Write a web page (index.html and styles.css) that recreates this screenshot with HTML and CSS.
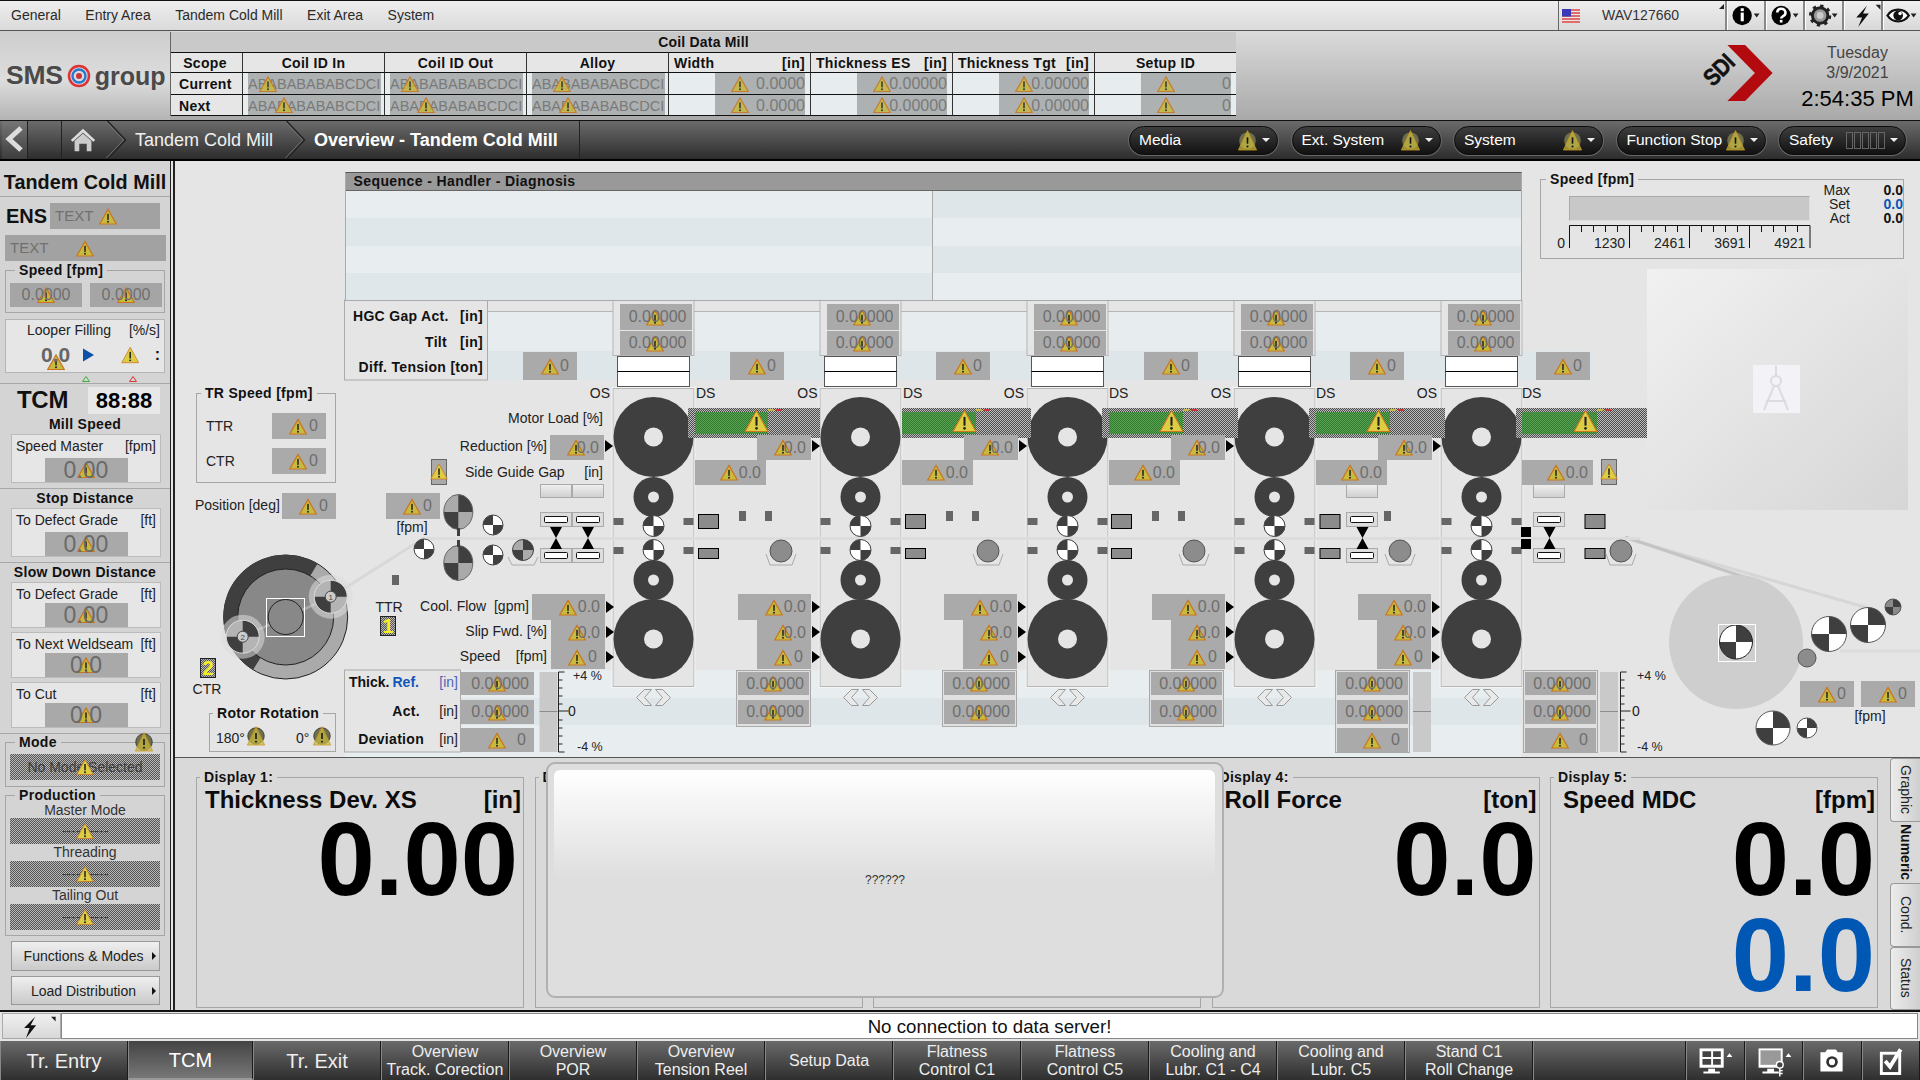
FILE: index.html
```html
<!DOCTYPE html>
<html lang="en">
<head>
<meta charset="utf-8">
<title>Overview - Tandem Cold Mill</title>
<link rel="stylesheet" href="styles.css">
</head>
<body>
<svg class="defs" aria-hidden="true">
  <symbol id="w" viewBox="0 0 24 22"><polygon points="12,1.5 23,21 1,21" fill="#c8ba3e" stroke="#c9761f" stroke-width="1.6"/><rect x="11" y="7.5" width="2" height="8" fill="#222"/><circle cx="12" cy="18" r="1.3" fill="#222"/></symbol>
  <symbol id="wb" viewBox="0 0 24 22"><polygon points="12,1 23,21 1,21" fill="#dccd45" stroke="#c9761f" stroke-width="1"/><rect x="11" y="7" width="2" height="8.5" fill="#222"/><circle cx="12" cy="18" r="1.3" fill="#222"/></symbol>
  <symbol id="wc" viewBox="0 0 24 26"><circle cx="12" cy="13" r="11" fill="#6f6f4c" stroke="#2a2a2a"/><polygon points="12,0.500 23.500,25 0.500,25" fill="#c8ba3e" fill-opacity=".72" stroke="#c9961f"/><rect x="11" y="9" width="2" height="8" fill="#111"/><circle cx="12" cy="20.500" r="1.300" fill="#111"/></symbol>
</svg>

<header class="menubar">
  <nav class="menu"><span>General</span><span>Entry Area</span><span>Tandem Cold Mill</span><span>Exit Area</span><span>System</span></nav>
  <div class="login">
    <svg class="flag" viewBox="0 0 18 14"><rect width="18" height="14" fill="#e8e8e8"/><path d="M0 1h18M0 4h18M0 7h18M0 10h18M0 13h18" stroke="#d44" stroke-width="1.4"/><rect width="9" height="7.5" fill="#3a3ab8"/></svg>
    <span>WAV127660</span><i class="corner"></i>
  </div>
  <div class="tile"><svg viewBox="0 0 39 30"><circle cx="15" cy="15" r="10" fill="#000"/><rect x="13.5" y="12" width="3.2" height="9" fill="#fff"/><rect x="13.5" y="7.5" width="3.2" height="3" fill="#fff"/><path d="M27 13h6l-3 4z" fill="#222"/></svg></div>
  <div class="tile"><svg viewBox="0 0 39 30"><circle cx="15" cy="15" r="10" fill="#000"/><path d="M11 12a4.2 4 0 1 1 6 3.6c-1.4.8-2 1.4-2 2.6" fill="none" stroke="#fff" stroke-width="2.6"/><rect x="13.6" y="19.5" width="2.8" height="2.8" fill="#fff"/><path d="M27 13h6l-3 4z" fill="#222"/></svg></div>
  <div class="tile"><svg viewBox="0 0 39 30"><circle cx="15" cy="15" r="8" fill="#999" stroke="#222" stroke-width="3"/><circle cx="15" cy="15" r="10" fill="none" stroke="#222" stroke-width="3" stroke-dasharray="3.4 4.4"/><circle cx="15" cy="15" r="3.5" fill="#ccc"/><path d="M27 13h6l-3 4z" fill="#222"/></svg></div>
  <div class="tile"><svg viewBox="0 0 39 30"><path d="M23 5L12 17h6l-4 10 11-14h-6z" fill="#111"/><path d="M32 4h5v5z" fill="#222"/></svg></div>
  <div class="tile"><svg viewBox="0 0 39 30"><path d="M4 15c5-8 17-8 22 0-5 8-17 8-22 0z" fill="#fff" stroke="#111" stroke-width="2.4"/><circle cx="15" cy="15" r="5" fill="#111"/><circle cx="17" cy="13" r="1.8" fill="#fff"/><path d="M28 13h6l-3 4z" fill="#222"/></svg></div>
</header>

<section class="head">
  <div class="logo"><span class="sms">SMS</span><svg class="ring" viewBox="0 0 24 24"><circle cx="12" cy="12" r="10" fill="#d9d9e4" stroke="#d33" stroke-width="2.5"/><circle cx="12" cy="12" r="6.5" fill="none" stroke="#2a78c8" stroke-width="2.4"/><circle cx="12" cy="12" r="3" fill="#c33"/></svg><span class="grp">group</span></div>
  <div class="coil">
    <div class="coil-t">Coil Data Mill</div>
    <div class="th">Scope</div><div class="th">Coil ID In</div><div class="th">Coil ID Out</div><div class="th">Alloy</div>
    <div class="th sp"><span>Width</span><span>[in]</span></div><div class="th sp"><span>Thickness ES</span><span>[in]</span></div><div class="th sp"><span>Thickness Tgt</span><span>[in]</span></div><div class="th">Setup ID</div>
    <div class="rh">Current</div>
    <div class="td"><b>ABABABABABCDCI</b><svg class="w c25"><use href="#w"/></svg></div>
    <div class="td"><b>ABABABABABCDCI</b><svg class="w c25"><use href="#w"/></svg></div>
    <div class="td"><b>ABABABABABCDCI</b><svg class="w c35"><use href="#w"/></svg></div>
    <div class="td num"><b>0.0000</b><svg class="w c71"><use href="#w"/></svg></div>
    <div class="td num"><b>0.00000</b><svg class="w c71"><use href="#w"/></svg></div>
    <div class="td num"><b>0.00000</b><svg class="w c71"><use href="#w"/></svg></div>
    <div class="td num"><b>0</b><svg class="w c71"><use href="#w"/></svg></div>
    <div class="rh">Next</div>
    <div class="td"><b>ABABABABABCDCI</b><svg class="w c41"><use href="#w"/></svg></div>
    <div class="td"><b>ABABABABABCDCI</b><svg class="w c41"><use href="#w"/></svg></div>
    <div class="td"><b>ABABABABABCDCI</b><svg class="w c41"><use href="#w"/></svg></div>
    <div class="td num"><b>0.0000</b><svg class="w c71"><use href="#w"/></svg></div>
    <div class="td num"><b>0.00000</b><svg class="w c71"><use href="#w"/></svg></div>
    <div class="td num"><b>0.00000</b><svg class="w c71"><use href="#w"/></svg></div>
    <div class="td num"><b>0</b><svg class="w c71"><use href="#w"/></svg></div>
  </div>
  <div class="sdi"><span class="sdi-t">SDI</span><svg viewBox="0 0 46 58"><polygon points="0,0 18,0 46,28.500 18,57 0,57 28,28.500" fill="#b30a10"/></svg></div>
  <div class="clock"><div>Tuesday</div><div>3/9/2021</div><div class="time">2:54:35 PM</div></div>
</section>

<nav class="nav">
  <div class="back"><svg viewBox="0 0 26 36"><path d="M19 7L7 18l12 11" fill="none" stroke="#ddd" stroke-width="5"/></svg></div>
  <div class="home"><svg viewBox="0 0 30 30"><path d="M15 3L2 15l2 2L15 7l11 10 2-2z" fill="#ddd"/><path d="M6 16L15 8l9 8v11h-5v-8h-8v8H6z" fill="#ccc"/></svg></div>
  <svg class="chev" viewBox="0 0 19 40"><path d="M0 0l19 20L0 40" fill="none" stroke="#222" stroke-width="1.500"/><path d="M-1 1l18 19L-1 39" fill="none" stroke="#777"/></svg>
  <span class="crumb">Tandem Cold Mill</span>
  <svg class="chev" viewBox="0 0 19 40"><path d="M0 0l19 20L0 40" fill="none" stroke="#222" stroke-width="1.500"/><path d="M-1 1l18 19L-1 39" fill="none" stroke="#777"/></svg>
  <span class="crumb cur">Overview - Tandem Cold Mill</span>
  <div class="pills">
    <div class="pill"><span>Media</span><svg class="wp"><use href="#wc"/></svg><i class="dd"></i></div>
    <div class="pill"><span>Ext. System</span><svg class="wp"><use href="#wc"/></svg><i class="dd"></i></div>
    <div class="pill"><span>System</span><svg class="wp"><use href="#wc"/></svg><i class="dd"></i></div>
    <div class="pill"><span>Function Stop</span><svg class="wp"><use href="#wc"/></svg><i class="dd"></i></div>
    <div class="pill safety"><span>Safety</span><em class="cells"><u></u><u></u><u></u><u></u><u></u></em><i class="dd"></i></div>
  </div>
</nav>

<main class="main">
  <aside class="side">
    <h1 class="s-title">Tandem Cold Mill</h1>
    <div class="ens"><strong>ENS</strong><div class="tx w110">TEXT<svg class="wi"><use href="#w"/></svg></div></div>
    <div class="tx full">TEXT<svg class="wi far"><use href="#w"/></svg></div>
    <fieldset class="fs-speed"><legend>Speed [fpm]</legend><div class="two"><div class="v16">0.0000<svg class="w ctr"><use href="#w"/></svg></div><div class="v16">0.0000<svg class="w ctr"><use href="#w"/></svg></div></div></fieldset>
    <div class="looper">
      <div class="lp-h"><span>Looper Filling</span><span>[%/s]</span></div>
      <div class="lp-v"><span class="lp-n">0.0<svg class="w ctr"><use href="#w"/></svg></span><svg class="play" viewBox="0 0 12 14"><path d="M0 0l12 7-12 7z" fill="#0b4fa8"/></svg><svg class="wi lp-w"><use href="#wb"/></svg><span class="lp-c">:</span></div>
    </div>
    <div class="lim"><svg viewBox="0 0 8 6"><path d="M4 .5L7.500 5.500H.5z" fill="none" stroke="#3fae3f"/></svg><svg viewBox="0 0 8 6"><path d="M4 .5L7.500 5.500H.5z" fill="none" stroke="#d33"/></svg></div>
    <section class="sec tcm">
      <div class="tcm-r"><strong>TCM</strong><div class="led">88:88</div></div>
      <h2>Mill Speed</h2>
      <div class="rd"><div class="rd-h"><span>Speed Master</span><span>[fpm]</span></div><div class="vb">0.00<svg class="w ctr"><use href="#w"/></svg></div></div>
    </section>
    <section class="sec">
      <h2 class="h19">Stop Distance</h2>
      <div class="rd"><div class="rd-h"><span>To Defect Grade</span><span>[ft]</span></div><div class="vb">0.00<svg class="w ctr"><use href="#w"/></svg></div></div>
    </section>
    <section class="sec">
      <h2 class="h19">Slow Down Distance</h2>
      <div class="rd sm"><div class="rd-h"><span>To Defect Grade</span><span>[ft]</span></div><div class="vb">0.00<svg class="w ctr"><use href="#w"/></svg></div></div>
      <div class="rd sm"><div class="rd-h"><span>To Next Weldseam</span><span>[ft]</span></div><div class="vb">0.0<svg class="w ctr"><use href="#w"/></svg></div></div>
      <div class="rd sm"><div class="rd-h"><span>To Cut</span><span>[ft]</span></div><div class="vb">0.0<svg class="w ctr"><use href="#w"/></svg></div></div>
    </section>
    <fieldset class="fs-mode"><legend>Mode</legend><svg class="wm"><use href="#wc"/></svg><div class="dt">No Mode Selected<svg class="w ctr"><use href="#wb"/></svg></div></fieldset>
    <fieldset class="fs-prod"><legend>Production</legend>
      <div class="pl first">Master Mode</div><div class="dt">----------<svg class="w ctr"><use href="#wb"/></svg></div>
      <div class="pl">Threading</div><div class="dt">----------<svg class="w ctr"><use href="#wb"/></svg></div>
      <div class="pl">Tailing Out</div><div class="dt">----------<svg class="w ctr"><use href="#wb"/></svg></div>
    </fieldset>
    <div class="sbtn">Functions &amp; Modes</div>
    <div class="sbtn h29">Load Distribution</div>
  </aside>
  <div class="sep"></div>
  <div class="work">
    <section class="overview">
      <svg id="art" class="art" viewBox="175 161 1745 596"></svg>
      <div class="seq">
        <div class="seq-t">Sequence - Handler - Diagnosis</div>
        <div class="seq-b"><div class="seq-l"></div><div class="seq-r"></div></div>
      </div>
      <fieldset class="speed"><legend>Speed [fpm]</legend>
        <div class="sp-l">
          <div class="sp-bar"></div>
          <svg class="sp-sc" viewBox="0 0 242 23"><path d="M.5 23V.5h240.500V23M60.500 23V.5M120.500 23V.5M180.500 23V.5M12.500 7V.5M24.500 7V.5M36.500 7V.5M48.500 7V.5M72.500 7V.5M84.500 7V.5M96.500 7V.5M108.500 7V.5M132.500 7V.5M144.500 7V.5M156.500 7V.5M168.500 7V.5M192.500 7V.5M204.500 7V.5M216.500 7V.5M228.500 7V.5" fill="none" stroke="#111"/></svg>
          <div class="sp-n"><span>0</span><span>1230</span><span>2461</span><span>3691</span><span>4921</span></div>
        </div>
        <div class="sp-r">
          <span>Max</span><b>0.0</b><span>Set</span><b class="bl">0.0</b><span>Act</span><b>0.0</b>
        </div>
      </fieldset>
      <div id="nodes" class="nodes"></div>
    </section>
    <section class="displays">
      <fieldset class="dsp d1"><legend>Display 1:</legend><div class="d-h"><span>Thickness Dev. XS</span><span>[in]</span></div><div class="d-v">0.00</div></fieldset>
      <fieldset class="dsp"><legend>Display 2:</legend></fieldset>
      <fieldset class="dsp"><legend>Display 3:</legend></fieldset>
      <fieldset class="dsp"><legend>Display 4:</legend><div class="d-h in4"><span>Roll Force</span><span>[ton]</span></div><div class="d-v">0.0</div></fieldset>
      <fieldset class="dsp"><legend>Display 5:</legend><div class="d-h in4"><span>Speed MDC</span><span>[fpm]</span></div><div class="d-v">0.0</div><div class="d-v blue">0.0</div></fieldset>
      <div class="tabs"><div class="tab">Graphic</div><div class="tab on">Numeric</div><div class="tab">Cond.</div><div class="tab">Status</div></div>
      <div class="modal"><div class="gloss"></div><span>??????</span></div>
    </section>
  </div>
</main>

<div class="status">
  <div class="bolt"><svg viewBox="0 0 58 28"><path d="M33 3L21 15h6l-4 11 11-14h-6z" fill="#111"/><path d="M50 3h5v5z" fill="#222"/></svg></div>
  <div class="msg">No connection to data server!</div>
</div>

<footer class="bnav">
  <div class="bt big">Tr. Entry</div>
  <div class="bt big on">TCM</div>
  <div class="bt big">Tr. Exit</div>
  <div class="bt">Overview<br>Track. Corection</div>
  <div class="bt">Overview<br>POR</div>
  <div class="bt">Overview<br>Tension Reel</div>
  <div class="bt">Setup Data</div>
  <div class="bt">Flatness<br>Control C1</div>
  <div class="bt">Flatness<br>Control C5</div>
  <div class="bt">Cooling and<br>Lubr. C1 - C4</div>
  <div class="bt">Cooling and<br>Lubr. C5</div>
  <div class="bt">Stand C1<br>Roll Change</div>
  <div class="bt fill"></div>
  <div class="bi"><svg viewBox="0 0 58 38"><rect x="13" y="7" width="25" height="20" fill="#fff"/><path d="M16 10h9v6h-9zM27 10h8v6h-8zM16 18h9v6h-9zM27 18h8v6h-8z" fill="#444"/><path d="M22 28h7v3h5v2H17v-2h5z" fill="#fff"/><path d="M41 16l3-4 3 4z" fill="#fff"/></svg></div>
  <div class="bi"><svg viewBox="0 0 58 38"><rect x="13" y="7" width="25" height="20" fill="#fff"/><rect x="15" y="9" width="21" height="15" fill="#999"/><path d="M22 28h7v3h5v2H17v-2h5z" fill="#fff"/><circle cx="35" cy="24" r="3.500" fill="#444" stroke="#fff" stroke-width="1.500"/><path d="M35 27v9M35 33h3M35 30h3" stroke="#fff" stroke-width="1.500"/><path d="M41 16l3-4 3 4z" fill="#fff"/></svg></div>
  <div class="bi"><svg viewBox="0 0 58 38"><path d="M17 11h5l2-3h9l2 3h5v20H17z" fill="#fff"/><circle cx="29" cy="21" r="6" fill="#333"/><circle cx="29" cy="21" r="3.200" fill="#fff"/></svg></div>
  <div class="bi"><svg viewBox="0 0 58 38"><rect x="19" y="12" width="19" height="21" fill="none" stroke="#fff" stroke-width="3"/><path d="M23 20l5 6 11-18" fill="none" stroke="#fff" stroke-width="4"/></svg></div>
</footer>
<script src="script.js"></script>
</body>
</html>
```
FILE: styles.css
```css
*{box-sizing:border-box}
html,body{margin:0;padding:0}
body{width:1920px;height:1080px;overflow:hidden;font:14px/1.2 "Liberation Sans",Arial,sans-serif;color:#222;background:#e5e5e5;display:flex;flex-direction:column}
.defs{position:absolute;width:0;height:0}
svg{display:block}
legend{font-weight:bold;font-size:14px;line-height:16px;letter-spacing:.3px;padding:0 4px;margin-left:5px;color:#111}
fieldset{margin:0;border:1px solid #a6a6a6;min-width:0}

/* warning */
.w{position:absolute;width:18px;height:17px;top:50%;transform:translateY(-50%);overflow:visible}
.w.ctr{left:50%;transform:translate(-50%,-50%)}
.wi{display:inline-block;width:18px;height:17px;margin-left:6px}

/* menu */
.menubar{height:31px;flex:none;display:flex;border-top:1px solid #111;border-bottom:1px solid #555;background:linear-gradient(#eee,#dadada)}
.menu{display:flex;gap:24.500px;padding:0 0 0 11px;align-items:center;flex:1;color:#2a2a2a}
.login{width:167px;position:relative;display:flex;align-items:center;border-left:1px solid #666;padding-left:3px;color:#333}
.flag{width:18px;height:14px;margin-right:22px}
.corner{position:absolute;right:1px;top:3px;border-style:solid;border-width:0 0 5px 5px;border-color:transparent transparent transparent #222;transform:rotate(180deg)}
.tile{width:39px;border-left:2px solid #888;box-shadow:inset 1px 0 0 #fff;background:linear-gradient(#f0f0f0,#d8d8d8)}
.tile svg{width:39px;height:29px}

/* header */
.head{height:89px;flex:none;display:flex;background:linear-gradient(#dadada,#a9a9a9)}
.logo{width:170px;display:flex;align-items:center;padding:0 0 0 6px;font-weight:bold;color:#4a4a4a;background:linear-gradient(#cdcdcd,#dddddd 55%,#b4b4b4);font-size:25px}
.sms{font-size:26.500px;letter-spacing:-.2px}
.ring{width:24px;height:24px;margin:0 4px 0 4px}
.coil{width:1066px;height:84px;margin-top:1px;display:grid;grid-template-columns:71px repeat(7,142px);grid-template-rows:20px 21px 22px 21px;border-right:1px solid #666;border-bottom:1px solid #666;border-left:1px solid #666}
.coil-t{grid-column:1/-1;background:#c9c9c9;font-weight:bold;text-align:center;line-height:21px;letter-spacing:.2px;color:#111}
.th{background:#e6e6e6;border-top:1px solid #111;border-bottom:1px solid #111;border-left:1px solid #333;font-weight:bold;text-align:center;line-height:20px;letter-spacing:.3px;color:#111;padding:0 5px;white-space:nowrap}
.th:nth-child(2){border-left:0;padding-left:0;padding-right:3px}
.th.sp{display:flex;justify-content:space-between}
.rh{background:#e6e6e6;border-bottom:1px solid #111;font-weight:bold;padding-left:8px;line-height:22px;letter-spacing:.3px;color:#111}
.td{position:relative;background:#e7edef;border-left:1px solid #333;border-bottom:1px solid #111;padding:0 3px 0 5px;overflow:hidden}
.td b{display:block;height:100%;font-weight:normal;font-size:14.500px;line-height:22px;color:#7a7a7a;background:#adb1b1;overflow:hidden;white-space:nowrap}
.td.num{padding:0 5px 0 46px}
.td.num b{text-align:right;font-size:16px}
.td .w{opacity:.85}
.c25{left:16px}.c35{left:26px}.c41{left:32px}.c71{left:62px}
.sdi{position:relative;width:46px;height:57px;margin:14px 0 0 491px}
.sdi svg{width:46px;height:57px}
.sdi-t{position:absolute;left:-27px;top:11px;font-weight:bold;font-size:24px;letter-spacing:-.5px;color:#111;-webkit-text-stroke:.5px #111;transform:rotate(-45deg) scaleX(.86)}
.clock{flex:1;text-align:center;font-size:16px;line-height:19.500px;color:#444;padding-top:12px;margin-left:22px}
.time{font-size:22px;color:#000;line-height:30px;margin-top:2px}

/* nav */
.nav{height:41px;flex:none;display:flex;align-items:center;background:linear-gradient(#6b6b6b,#2d2d2d);border-top:1px solid #111;border-bottom:2px solid #000;color:#fff}
.back{width:26px;height:38px;margin-left:2px;background:rgba(255,255,255,.08);border-right:1px solid #222}
.back svg{width:26px;height:36px}
.home{width:46px;height:38px;margin-left:33px;border-left:1px solid #222;padding:4px 0 0 7px}
.home svg{width:28px;height:30px}
.chev{width:19px;height:38px;flex:none;overflow:visible}
.crumb{font-size:18px;padding:2px 13px 0 9px;color:#f0f0f0;white-space:nowrap}
.cur{font-weight:bold;color:#fff;padding:0 21px 0 9px;border-right:1px solid #222;line-height:38px}
.pills{margin-left:auto;display:flex;gap:13.500px;padding-right:14px}
.pill{width:149px;height:29px;border-radius:15px;background:linear-gradient(#3e3e3e,#111);border:1px solid #0c0c0c;box-shadow:0 0 0 1px #666;display:flex;align-items:center;padding:0 7px 0 9px;font-size:15.500px;color:#fff}
.pill span{flex:1;white-space:nowrap}
.wp{width:19px;height:23px}
.dd{width:0;height:0;border:4px solid transparent;border-top:4px solid #eee;border-bottom:0;margin-left:5px}
.safety{width:127px}
.cells{display:flex;gap:1px;margin-right:0}
.cells u{display:block;width:7px;height:17px;border:1px solid #666}

/* main */
.main{height:849px;flex:none;display:flex}
.side{width:170px;background:#d4d4d4;flex:none;overflow:hidden}
.sep{width:5px;flex:none;background:#e5e5e5;border-left:1px solid #222;border-right:2px solid #222}
.work{flex:1;display:flex;flex-direction:column;min-width:0}
.s-title{margin:0;height:36px;padding-top:9px;font-size:19.800px;line-height:24px;text-align:center;color:#111;border-bottom:1px solid #a8a8a8}
.ens{display:flex;align-items:center;margin-top:6px;padding:0 10px 0 6px;height:26px}
.ens strong{font-size:20px;color:#111}
.tx{background:#a2a2a2;color:#707070;font-size:15px;display:flex;align-items:center;padding-left:5px;height:26px}
.w110{width:110px;margin-left:auto}
.full{width:161px;margin:6px 0 0 5px}
.far{margin-left:28px}
.fs-speed{margin:1px 5px 0;padding:5px 2px 5px 4px;width:160px}
.two{display:flex;gap:8px}
.v16{position:relative;isolation:isolate;width:72px;height:24px;background:#a5a5a5;color:#707070;font-size:16px;line-height:24px;text-align:center}
.v16 .w,.vb .w{z-index:-1}
.looper{margin:6px 5px 0;height:54px;background:#e6e6e6;border:1px solid #b5b5b5;padding:0 4px 0 21px}
.lp-h{display:flex;justify-content:space-between;line-height:20px}
.lp-v{display:flex;align-items:center;height:30px;padding-left:14px;position:relative}
.lp-n{position:relative;isolation:isolate;font-size:21px;font-weight:bold;line-height:24px;color:#666}
.lp-n .w{z-index:-1;top:78%}
.play{width:12px;height:14px;margin-left:13px}
.lp-w{width:20px;height:22px;margin-left:27px}
.lp-c{font-weight:bold;font-size:16px;margin-left:15px;color:#111}
.lim{height:11px;border-bottom:1px solid #a8a8a8;display:flex;gap:39px;padding:3px 0 0 82px}
.lim svg{width:8px;height:6px}
.sec{border-bottom:1px solid #a8a8a8;padding-bottom:5px}
.tcm{padding-bottom:5px}
.sec h2{margin:0;font-size:14px;line-height:19px;text-align:center;color:#111;letter-spacing:.3px}
.tcm-r{display:flex;align-items:center;height:27px;margin-top:3px;padding:0 10px 0 17px}
.tcm-r strong{font-size:24px;color:#111;letter-spacing:-.3px}
.led{margin-left:auto;width:72px;height:27px;background:#e8e8e8;font-size:22px;font-weight:bold;line-height:27px;text-align:center;color:#000}
.tcm h2{line-height:20px}
.rd{width:150px;height:49px;margin-left:11px;background:#e6e6e6;border:1px solid #bbb}
.rd.sm{height:46px;margin-bottom:4px}
.rd.sm:last-child{margin-bottom:0}
.rd-h{display:flex;justify-content:space-between;padding:2px 4px 0 4px;line-height:18px;white-space:nowrap}
.vb{position:relative;isolation:isolate;width:83px;height:24px;margin:3px auto 0;background:#a9a9a9;color:#6a6a6a;font-size:23px;line-height:24px;text-align:center}
.rd.sm .vb{margin-top:0}
.fs-mode{margin:0 5px;padding:4px 4px 6px;width:160px;position:relative}
.fs-prod{margin:0 5px;padding:0 4px 5px;width:160px}
.wm{position:absolute;width:18px;height:20px;right:11px;top:-18px}
.dt{position:relative;height:26px;width:150px;line-height:26px;text-align:center;color:#3c3c3c;white-space:nowrap;background:repeating-conic-gradient(#555 0 25%,#b8b8b8 0 50%) 0 0/2px 2px}
.pl{height:17px;line-height:17px;text-align:center;color:#333}
.pl.first{height:15px;line-height:14px}
.sbtn{position:relative;width:149px;height:30px;margin:5px 0 0 11px;background:linear-gradient(#efefef,#cacaca);border:1px solid #999;line-height:28px;text-align:center;padding-right:4px;white-space:nowrap}
.sbtn::after{content:"";position:absolute;right:3px;top:10px;border-style:solid;border-width:4px 0 4px 4px;border-color:transparent transparent transparent #111}
.h29{height:29px}

/* overview */
.overview{position:relative;height:596px;flex:none;display:flex;align-items:flex-start;padding:11px 0 0 169.500px}
.art{position:absolute;left:0;top:0;width:1745px;height:596px}
.nodes{position:absolute;left:0;top:0;width:1745px;height:596px}
.seq{position:relative;width:1177px;height:129px;border-top:1px solid #555;border-left:1px solid #aaa;border-right:1px solid #aaa}
.seq-t{height:18px;background:#999;border-bottom:1px solid #666;font-weight:bold;line-height:17px;padding-left:8px;letter-spacing:.4px;color:#111}
.seq-b{display:flex;height:110px;border-bottom:1px solid #aaa}
.seq-l{width:587px;background:repeating-linear-gradient(#e8edf0 0 27.300px,#e0e7ea 27.300px 54.600px);border-right:1px solid #aaa}
.seq-r{flex:1;background:repeating-linear-gradient(#dfe6e9 0 27.300px,#e8edf0 27.300px 54.600px)}
.speed{position:relative;width:364px;height:88px;margin:-1px 0 0 18.500px;padding:0;display:flex}
.sp-l{width:281px;padding:9px 0 0 28px}
.sp-bar{width:241px;height:25px;background:#c8c8c8;border:1px solid #aaa;border-right-color:#ddd;border-bottom-color:#ddd}
.sp-sc{width:242px;height:23px;margin-top:4px}
.sp-n{display:flex;margin:-13px 0 0 -24px;line-height:16px;color:#222}
.sp-n span{width:60.100px;text-align:right}
.sp-n span:first-child{width:20px}
.sp-r{display:grid;grid-template-columns:32px 53px;grid-auto-rows:14px;margin-top:-4px;height:42px;text-align:right;line-height:14px}
.sp-r b{color:#111}
.sp-r .bl{color:#0a56b8}

/* diagram nodes */
.t{position:absolute;transform:translateY(-50%);white-space:nowrap;color:#222}
.t.b{font-weight:bold;color:#111;letter-spacing:.3px}
.t.tight{letter-spacing:0}
.t.bl{color:#1157b8}
.t.in{color:#4e63b8}
.t.c{transform:translate(-50%,-50%)}
.t.sm{font-size:12.500px}
.v{position:absolute;background:#aaa;color:#6e6e6e;font-size:16px;display:flex;align-items:center;justify-content:flex-end;padding-right:5px}
.v span{position:relative;z-index:1}
.v.p8{padding-right:8px}
.bar{position:absolute;background:repeating-conic-gradient(#4d4d4d 0 25%,#bcbcbc 0 50%) 0 0/2px 2px}
.grn{position:absolute;background:repeating-conic-gradient(#2f7a2f 0 25%,#5ca354 0 50%) 0 0/2px 2px}
.mk{position:absolute;height:2px}
.wa{position:absolute;overflow:visible}
.badge{position:absolute;background:repeating-conic-gradient(#555 0 25%,#b8b8b8 0 50%) 0 0/2px 2px;border:1px solid #222;color:#f4ee1c;font-size:20px;font-weight:bold;text-align:center;line-height:18px}
.wbox{position:absolute;background:#aaa;border:1px solid #666}
.fsb{position:absolute;border:1px solid #a6a6a6}

/* displays */
.displays{position:relative;flex:1;display:flex;align-items:flex-start;gap:10.500px;padding:11px 0 0 21px;background:#d9d9d9;border-top:1px solid #555}
.dsp{width:328px;height:239px;padding:0 2px 0 8px;flex:none;background:#d9d9d9}
.dsp legend{margin-left:-5px}
.d-h{display:flex;justify-content:space-between;align-items:center;height:28px;margin-top:1px;font-weight:bold;font-size:24px;color:#0c0c0c;white-space:nowrap}
.in4{padding-left:4px}
.d-v{font-weight:bold;font-size:103px;line-height:100px;height:100px;text-align:right;color:#000;margin-top:-4px}
.d1 .d-v{padding-right:3px}
.blue{color:#0057b4;line-height:92px;height:92px;margin-top:0}
.tabs{position:absolute;right:0;top:0;width:30px;height:252px;display:flex;flex-direction:column}
.tab{flex:1;writing-mode:vertical-rl;text-align:center;font-size:14px;line-height:28px;background:linear-gradient(90deg,#ececec,#cfcfcf);border:1px solid #999;border-right:0;border-radius:4px 0 0 4px;color:#222}
.tab.on{background:#d9d9d9;border:0;font-weight:bold;color:#111}
.modal{position:absolute;left:371px;top:4px;width:678px;height:236px;border:2px solid #b0b0b0;border-radius:9px;background:#dedede;display:flex;align-items:center;justify-content:center}
.gloss{position:absolute;left:6px;right:7px;top:6px;height:110px;border-radius:6px 6px 0 0;background:linear-gradient(#fff,rgba(222,222,222,0))}
.modal span{position:relative;font-size:12px;color:#333}

/* status */
.status{height:31px;flex:none;display:flex;border-top:2px solid #111;background:#e5e5e5;padding:1px 2px 2px 2px}
.bolt{width:59px;background:linear-gradient(#f0f0f0,#d8d8d8);border:1px solid #aaa}
.bolt svg{width:57px;height:26px}
.msg{flex:1;background:#fff;border:1px solid #888;text-align:center;font-size:18.670px;line-height:25px;color:#111}

/* bottom nav */
.bnav{height:39px;flex:none;display:flex;background:#3a3a3a}
.bt{width:128px;flex:none;background:linear-gradient(#6a6a6a,#2e2e2e);border-left:1px solid #888;border-right:1px solid #1a1a1a;color:#eee;font-size:16px;line-height:18px;text-align:center;display:flex;align-items:center;justify-content:center;white-space:nowrap}
.bt.big{font-size:20px}
.bt.on{width:125px;background:linear-gradient(#444,#777);color:#fff;border-bottom:2px solid #999}
.bt.fill{flex:1}
.bi{width:58.500px;flex:none;background:linear-gradient(#6a6a6a,#2e2e2e);border-left:1px solid #888;border-right:1px solid #1a1a1a}
.bi svg{width:56px;height:38px}
```
FILE: script.js
```js
const X0 = 175, Y0 = 161;
const C = [653.5, 860.5, 1067.5, 1274.5, 1481.5];
const D = '#3f3f3f';
let s = '', h = '';

const warnSvg = (l, t, w, hh, id, cls) =>
  `<svg class="${cls || 'wa'}" style="left:${l}px;top:${t}px;width:${w}px;height:${hh}px"><use href="#${id}"/></svg>`;

function val(x0, x1, y0, y1, t, wc, extra) {
  h += `<div class="v ${extra || ''}" style="left:${x0 - X0}px;top:${y0 - Y0}px;width:${x1 - x0}px;height:${y1 - y0}px"><span>${t}</span>` +
    warnSvg(wc - x0 - 9, (y1 - y0 - 17) / 2, 18, 17, 'w') + `</div>`;
}
function text(x, y, t, cls, anchor) {
  const pos = anchor === 'r' ? `right:${1920 - x}px` : `left:${x - X0}px`;
  h += `<div class="t ${cls || ''} ${anchor === 'c' ? 'c' : ''}" style="${pos};top:${y - Y0}px">${t}</div>`;
}
function fs(x0, x1, y0, y1, label, lx) {
  h += `<div class="fsb" style="left:${x0 - X0}px;top:${y0 - Y0}px;width:${x1 - x0}px;height:${y1 - y0}px"></div>`;
  h += `<div class="t b" style="left:${lx - X0 - 4}px;top:${y0 - Y0}px;background:#e5e5e5;padding:0 4px">${label}</div>`;
}
function cls(c, x0, x1, y0, y1, inner, extra) {
  h += `<div class="${c}" style="left:${x0 - X0}px;top:${y0 - Y0}px;width:${x1 - x0}px;height:${y1 - y0}px;${extra || ''}">${inner || ''}</div>`;
}
function wa(cx, cy, w, hh, id) { h += warnSvg(cx - w / 2 - X0, cy - hh / 2 - Y0, w, hh, id); }

const rect = (x, y, w, hh, f, st) => `<rect x="${x}" y="${y}" width="${w}" height="${hh}" fill="${f}"${st ? ` stroke="${st}"` : ''}/>`;
function ball(cx, cy, rx, ry, a, b, st) {
  return `<ellipse cx="${cx}" cy="${cy}" rx="${rx}" ry="${ry}" fill="${a}"/>` +
    `<path d="M${cx} ${cy}L${cx} ${cy - ry}A${rx} ${ry} 0 0 1 ${cx + rx} ${cy}ZM${cx} ${cy}L${cx} ${cy + ry}A${rx} ${ry} 0 0 1 ${cx - rx} ${cy}Z" fill="${b}"/>` +
    `<ellipse cx="${cx}" cy="${cy}" rx="${rx}" ry="${ry}" fill="none" stroke="${st || '#444'}"/>`;
}
function wheel(c, cy, r, hole) {
  return `<circle cx="${c}" cy="${cy}" r="${r}" fill="${D}"/><circle cx="${c}" cy="${cy}" r="${hole}" fill="#e5e5e5"/>`;
}
function pinch(cx) {
  return `<path d="M${cx - 15} 554l4 11h22l4-11" fill="none" stroke="#aaa"/><circle cx="${cx}" cy="551" r="11" fill="#8c8c8c" stroke="#555"/>`;
}
function lensBtn(x, y) {
  return `<rect x="${x}" y="${y}" width="31" height="14" fill="#ddd" stroke="#aaa"/>` +
    `<rect x="${x + 4}" y="${y + 4}" width="23" height="6" rx="1" fill="#fff" stroke="#111"/>`;
}
function plainBtn(x, y) {
  return `<rect x="${x}" y="${y}" width="31" height="13" fill="url(#btn)" stroke="#aaa"/>`;
}
function hourglass(c) {
  return `<path d="M${c - 6} 527h12l-6 11l6 11h-12l6-11z" fill="#000"/>`;
}
function scale(x) {
  let d = `M${x + 6} 672h-6V752h6M${x} 711h10`;
  for (let y = 680; y < 752; y += 8) if (y !== 712) d += `M${x} ${y}h4`;
  return `<path d="${d}" fill="none" stroke="#222"/>`;
}
function gauge(x) {
  return rect(x, 672, 18, 80, '#c9c9c9') + `<path d="M${x} 711.5h18" stroke="#8c8c8c"/>`;
}

/* backdrop */
s += `<defs><linearGradient id="btn" x1="0" y1="0" x2="0" y2="1"><stop offset="0" stop-color="#f0f0f0"/><stop offset="1" stop-color="#cfcfcf"/></linearGradient>` +
  `<linearGradient id="pnl" x1="0" y1="0" x2="1" y2="1"><stop offset="0" stop-color="#f1f1f1"/><stop offset="1" stop-color="#d6d6d6"/></linearGradient></defs>`;
s += rect(1647, 269, 261, 241, 'url(#pnl)');
s += rect(1753, 365, 47, 48, '#f3f3f7');
s += `<g fill="none" stroke="#dcdcdf" stroke-width="2"><circle cx="1776" cy="381" r="5"/><path d="M1776 366v10M1774 386l-10 24M1778 386l10 24M1766 401h20"/></g>`;

/* HGC + Thickness bands */
s += rect(488, 311, 1033, 40, '#e7edef') + rect(488, 351, 1105, 29, '#dfe6e9') + `<path d="M488 311.5h1033" stroke="#b5b5b5"/>`;
s += rect(344.5, 300, 143, 80, '#e5e5e5', '#aaa');
s += rect(344.5, 670, 1177, 28, '#e8edf0') + rect(344.5, 698, 1177, 27, '#dfe6e9') + rect(344.5, 725, 1177, 32, '#e8edf0');
s += rect(344.5, 670, 116, 82, '#e5e5e5', '#aaa');

/* strip line */
s += `<path d="M242 637L331 597L424 538" stroke="#d8d8d8" stroke-width="3" fill="none"/>`;
s += `<path d="M1625 538L1868 608" stroke="#d6d6d6" stroke-width="3" fill="none"/><path d="M1625 537L1753 580" stroke="#c4c4c4" stroke-width="3" fill="none"/>`;
s += `<path d="M1840 651H1920" stroke="#dcdcdc" stroke-width="3"/>`;

C.forEach((c) => {
  s += rect(c - 40.5, 388.5, 81, 298, '#e5e5e5', '#b5b5b5');
  s += `<rect x="${c - 41.5}" y="387.5" width="83" height="300" fill="none" stroke="#f4f4f4"/>`;
});
s += rect(424, 537, 1216, 3, '#dcdcdc');

C.forEach((c) => {
  /* tension boxes, hgc frames */
  s += rect(c - 36, 356.5, 72, 30, '#fff', '#555') + `<path d="M${c - 36} 371.5h72" stroke="#000"/>`;
  s += rect(c - 40.5, 300.5, 81, 55, '#e5e5e5', '#b5b5b5');
  /* rolls */
  s += wheel(c, 437, 40, 9.5) + wheel(c, 497, 20, 5.5);
  s += ball(c, 526, 10.5, 10.5, D, '#fff') + ball(c, 550, 10.5, 10.5, D, '#fff');
  s += wheel(c, 580, 20, 5.5) + wheel(c, 639, 40, 9.5);
  /* side squares */
  s += rect(c - 40, 518, 10, 7, '#666') + rect(c + 30, 518, 10, 7, '#666') + rect(c - 40, 547, 10, 7, '#666') + rect(c + 30, 547, 10, 7, '#666');
  /* chevrons */
  s += `<path d="M${c - 2} 689.5h-7l-8 8 8 8h7l-7-8zM${c + 2} 689.5h7l8 8-8 8h-7l7-8z" fill="#e9e9e9" stroke="#999"/>`;
});

/* pedestals between stands */
[698, 905, 1111, 1319.5, 1584.5].forEach((x) => {
  s += rect(x + .5, 514.5, 20, 14, '#8c8c8c', '#000') + rect(x + .5, 548.5, 20, 10, '#8c8c8c', '#000');
});
[[739, 765], [946, 972], [1152, 1178], [1384]].forEach((a) => a.forEach((x) => { s += rect(x, 511, 7, 10, '#666'); }));
s += rect(392, 575, 7, 10, '#666');
[781, 988, 1194, 1400, 1621].forEach((x) => { s += pinch(x); });

/* entry guide */
s += plainBtn(540.5, 484.5) + plainBtn(572.5, 484.5);
s += lensBtn(540.5, 512.5) + lensBtn(572.5, 512.5) + lensBtn(540.5, 548.5) + lensBtn(572.5, 548.5);
s += hourglass(556) + hourglass(588);
s += plainBtn(1346.5, 484.5) + lensBtn(1346.5, 512.5) + lensBtn(1346.5, 548.5) + hourglass(1362.5);
s += plainBtn(1533.5, 484.5) + lensBtn(1533.5, 512.5) + lensBtn(1533.5, 548.5) + hourglass(1549.5);
s += rect(1521, 527, 10, 10, '#000') + rect(1521, 539, 10, 10, '#000');

/* deflector rolls */
s += ball(458.3, 512, 14.5, 17.5, '#aaa', D, '#666') + rect(457, 528, 3, 8, D);
s += ball(458.3, 563, 14.5, 17.5, '#aaa', D, '#666') + rect(457, 540, 3, 7, D);
s += ball(424, 549, 10, 10, D, '#fff') + ball(493, 525, 10, 10, D, '#fff') + ball(493, 555, 10, 10, D, '#fff');
s += `<path d="M508 557l4 8h22l4-8" fill="none" stroke="#aaa"/>` + ball(523, 550, 10.5, 10.5, '#aaa', D);

/* coiler */
s += `<circle cx="285.700" cy="617" r="62" fill="#aaa" stroke="#222"/>`;
s += `<path d="M285.700 617L317.500 563.700A62 62 0 1 0 253.100 669.800Z" fill="${D}"/>`;
s += `<circle cx="285.700" cy="617" r="48" fill="#888" stroke="#222"/>`;
s += `<path d="M242 637L331 597" stroke="#bbb" stroke-width="2.500" opacity=".7"/>`;
s += `<circle cx="285.700" cy="617" r="17.500" fill="#888" stroke="#222"/>` + rect(266.5, 598.5, 38, 38, 'none', '#fff');
[[330.7, 596.7, '1'], [242.7, 636.7, '2']].forEach(([x, y, n]) => {
  s += `<circle cx="${x}" cy="${y}" r="22" fill="#dcdcdc" opacity=".55"/>` + ball(x, y, 16.5, 16.5, '#b4b4b4', D, '#ddd');
  s += `<circle cx="${x}" cy="${y}" r="5.500" fill="#ccc" stroke="#444"/><text x="${x}" y="${y + 3}" font-size="8" text-anchor="middle" fill="#444">${n}</text>`;
});

/* tension reel */
s += `<circle cx="1736" cy="642" r="67" fill="#cecece"/>`;
s += ball(1736, 642, 16.5, 17, '#fff', D, '#222') + rect(1718.5, 624.5, 37, 37, 'none', '#fff');
s += ball(1829, 634, 17.5, 17.5, '#fff', D, '#555') + ball(1868, 625, 17.5, 17.5, '#fff', D, '#555');
s += ball(1893, 607, 8, 8, '#8a8a8a', D, '#555');
s += `<circle cx="1807" cy="658" r="9" fill="#8c8c8c" stroke="#555"/>`;
s += ball(1773, 728, 17, 17, '#fff', D, '#555') + ball(1807, 728, 10, 10, '#fff', D, '#555');

/* gauges */
s += gauge(539.5) + scale(558.5) + gauge(1413) + gauge(1600) + scale(1620.5);
[736, 942, 1149, 1335, 1523].forEach((x, i) => {
  s += rect(x + .5, 670.5, 74, i > 2 ? 82 : 56, '#e0e0e0', '#a9a9a9');
});
document.getElementById('art').innerHTML = s;

/* labels */
text(353, 316, 'HGC Gap Act.', 'b'); text(483, 316, '[in]', 'b', 'r');
text(447, 342, 'Tilt', 'b', 'r'); text(483, 342, '[in]', 'b', 'r');
text(483, 367, 'Diff. Tension [ton]', 'b', 'r');
text(603, 418, 'Motor Load [%]', '', 'r');
text(547, 446, 'Reduction [%]', '', 'r');
text(465, 472, 'Side Guide Gap'); text(603, 472, '[in]', '', 'r');
text(529, 606, 'Cool. Flow &nbsp;[gpm]', '', 'r');
text(547, 631, 'Slip Fwd. [%]', '', 'r');
text(547, 656, 'Speed &nbsp; &nbsp;[fpm]', '', 'r');
text(349, 682, 'Thick.', 'b tight'); text(392.5, 682, 'Ref.', 'b tight bl');
text(420, 711, 'Act.', 'b', 'r'); text(424, 739, 'Deviation', 'b', 'r');
text(458, 682, '[in]', 'in', 'r'); text(458, 711, '[in]', '', 'r'); text(458, 739, '[in]', '', 'r');
text(573, 676, '+4 %', 'sm'); text(568, 711, '0'); text(577, 747, '-4 %', 'sm');
text(1637, 676, '+4 %', 'sm'); text(1632, 711, '0'); text(1637, 747, '-4 %', 'sm');

[610, 817.5, 1024, 1231, 1437].forEach((x) => text(x, 393, 'OS', '', 'r'));
[696, 903, 1109, 1316, 1522].forEach((x) => text(x, 393, 'DS'));

/* TR speed */
fs(195.5, 335.5, 393, 483, 'TR Speed [fpm]', 205);
text(206, 426, 'TTR'); text(206, 461, 'CTR');
val(272, 326, 413, 439, '0', 298, 'p8'); val(272, 326, 448, 474, '0', 298, 'p8');
text(195, 505, 'Position [deg]');
val(282, 336, 493, 519, '0', 308, 'p8');
val(386, 440, 493, 519, '0', 412, 'p8');
text(412, 527, '[fpm]', '', 'c');

/* badges */
text(389, 607, 'TTR', '', 'c');
cls('badge', 380, 396, 616, 636, '1');
cls('badge', 200, 216, 658, 678, '2');
text(207, 689, 'CTR', '', 'c');

/* rotor */
fs(208.5, 335.5, 713, 752, 'Rotor Rotation', 217);
text(216, 738, '180°'); text(296, 738, '0°');
wa(256, 736, 18, 20, 'wc'); wa(322, 736, 18, 20, 'wc');

/* hgc */
C.forEach((c) => {
  [[304, 330], [331, 355]].forEach(([a, b]) => val(c - 34, c + 38, a, b, '0.00000', c + 1.5));
});
[523, 730, 936, 1144, 1350, 1536].forEach((x) => val(x, x + 54, 352, 380, '0', x + 27, 'p8'));

/* motor load */
[[688, 820, 695, 768], [902, 1031, 902, 976], [1102, 1238, 1109, 1183], [1309, 1445, 1316, 1390], [1516, 1647, 1522, 1597]].forEach(([a, b, g0, g1]) => {
  cls('bar', a, b, 408, 438);
  cls('grn', g0, g1, 412, 434);
  cls('mk', g1, g1 + 6, 409, 411, '', 'background:#c8ba3e');
  cls('mk', g1 + 8, g1 + 14, 409, 411, '', 'background:#c33');
  wa(g1 - 12, 421, 25, 24, 'wb');
});

const arrows = [];
/* reduction, guide */
[550, 757, 964, 1171, 1378].forEach((x) => { val(x, x + 54, 435, 460, '0.0', x + 26); arrows.push([x + 54, 446]); });
[695, 902, 1109, 1316, 1522].forEach((x) => val(x, x + 71, 460, 485, '0.0', x + 34));
cls('wbox', 431, 447, 459, 485, warnSvg(-2, 3, 18, 17, 'wb'));
cls('wbox', 1601, 1617, 459, 485, warnSvg(-2, 3, 18, 17, 'wb'));

/* flow / slip / speed */
[532, 738, 944, 1152, 1358].forEach((x) => { val(x, x + 73, 594, 620, '0.0', x + 36); arrows.push([x + 73, 607]); });
[551, 757, 963, 1171, 1377].forEach((x) => {
  val(x, x + 54, 620, 645, '0.0', x + 26);
  val(x, x + 54, 645, 669, '0', x + 26, 'p8');
  arrows.push([x + 54, 632], [x + 54, 657]);
});
let ar = '';
arrows.forEach(([x, y]) => { ar += `<path d="M${x + 1} ${y - 6}l8 6-8 6z" fill="#000"/>`; });
document.getElementById('art').insertAdjacentHTML('beforeend', ar);

/* thickness */
val(461, 534, 672, 695, '0.00000', 497);
val(461, 534, 700, 724, '0.00000', 497);
val(461, 534, 728, 752, '0', 497, 'p8');
[736, 942, 1149, 1335, 1523].forEach((x, i) => {
  val(x + 2, x + 73, 672, 695, '0.00000', x + 37);
  val(x + 2, x + 73, 700, 724, '0.00000', x + 37);
  if (i > 2) val(x + 2, x + 73, 728, 752, '0', x + 37, 'p8');
});

/* reel values */
val(1800, 1854, 681, 707, '0', 1827, 'p8');
val(1861, 1915, 681, 707, '0', 1888, 'p8');
text(1870, 716, '[fpm]', '', 'c');

document.getElementById('nodes').innerHTML = h;
```
